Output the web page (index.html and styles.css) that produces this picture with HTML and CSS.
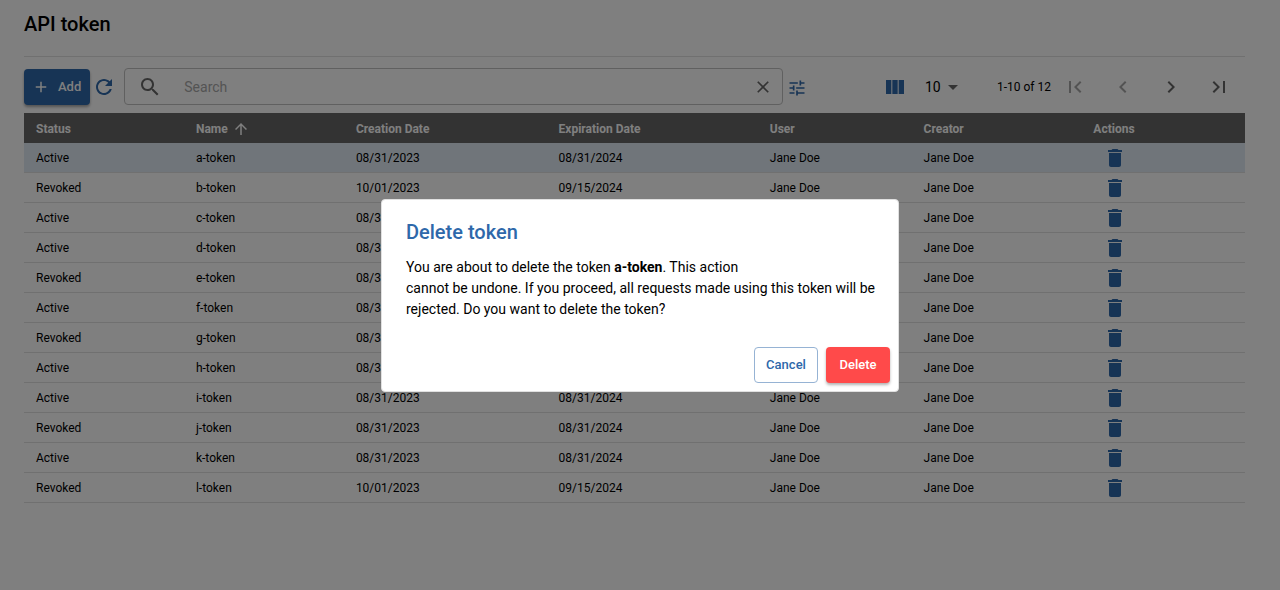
FILE: index.html
```html
<!DOCTYPE html>
<html lang="en">
<head>
<meta charset="utf-8">
<title>API token</title>
<meta name="viewport" content="width=device-width, initial-scale=1">
<link rel="stylesheet" href="styles.css">
</head>
<body>
<svg class="sprite" aria-hidden="true">
  <symbol id="trash" viewBox="0 0 24 24"><path d="M6 19c0 1.100.9 2 2 2h8c1.100 0 2-.9 2-2V7H6v12zM19 4h-3.500l-1-1h-5l-1 1H5v2h14V4z"/></symbol>
</svg>
<main class="page">
  <header class="page-header"><h1 class="page-title">API token</h1></header>
  <div class="toolbar">
    <button class="button button-add" type="button"><svg class="icon icon-small" viewBox="0 0 24 24"><path d="M19 13h-6v6h-2v-6H5v-2h6V5h2v6h6v2z"/></svg>Add</button>
    <button class="icon-button primary" type="button" aria-label="Refresh"><svg class="icon" viewBox="0 0 24 24"><path d="M17.650 6.350C16.200 4.900 14.210 4 12 4c-4.420 0-7.990 3.580-7.990 8s3.570 8 7.990 8c3.730 0 6.840-2.550 7.730-6h-2.080c-.82 2.330-3.040 4-5.650 4-3.310 0-6-2.690-6-6s2.690-6 6-6c1.660 0 3.140.69 4.220 1.780L13 11h7V4l-2.350 2.350z"/></svg></button>
    <div class="search">
      <svg class="icon" viewBox="0 0 24 24" aria-hidden="true"><path d="M15.500 14h-.79l-.28-.27C15.410 12.590 16 11.110 16 9.500 16 5.910 13.090 3 9.500 3S3 5.910 3 9.500 5.910 16 9.500 16c1.610 0 3.090-.59 4.230-1.570l.27.28v.79l5 4.990L20.490 19l-4.990-5zm-6 0C7.010 14 5 11.990 5 9.500S7.010 5 9.500 5 14 7.010 14 9.500 11.990 14 9.500 14z"/></svg>
      <input class="search-input" type="text" placeholder="Search" aria-label="Search">
      <button class="icon-button" type="button" aria-label="Clear"><svg class="icon icon-medium" viewBox="0 0 24 24"><path d="M19 6.410 17.590 5 12 10.590 6.410 5 5 6.410 10.590 12 5 17.590 6.410 19 12 13.410 17.590 19 19 17.590 13.410 12z"/></svg></button>
    </div>
    <button class="icon-button primary" type="button" aria-label="Search options"><svg class="icon icon-medium" viewBox="0 0 24 24"><path d="M3 17v2h6v-2H3zM3 5v2h10V5H3zm10 16v-2h8v-2h-8v-2h-2v6h2zM7 9v2H3v2h4v2h2V9H7zm14 4v-2H11v2h10zm-6-4h2V7h4V5h-4V3h-2v6z"/></svg></button>
    <div class="pagination">
      <button class="icon-button primary" type="button" aria-label="Columns"><svg class="icon" viewBox="0 0 24 24"><path d="M14.670 5v14H9.330V5h5.340zm1 14H21V5h-5.330v14zm-7.340 0V5H3v14h5.330z"/></svg></button>
      <label class="page-size">
        <select class="page-size-select" aria-label="Rows per page"><option>10</option><option>20</option></select>
        <svg class="icon" viewBox="0 0 24 24" aria-hidden="true"><path d="M7 10l5 5 5-5z"/></svg>
      </label>
      <span class="page-range">1-10 of 12</span>
      <div class="page-nav">
        <button class="icon-button nav-button" type="button" aria-label="First page" disabled><svg class="icon" viewBox="0 0 24 24"><path d="M18.410 16.590L13.820 12l4.590-4.590L17 6l-6 6 6 6zM6 6h2v12H6z"/></svg></button>
        <button class="icon-button nav-button" type="button" aria-label="Previous page" disabled><svg class="icon" viewBox="0 0 24 24"><path d="M15.410 7.410L14 6l-6 6 6 6 1.410-1.410L10.830 12z"/></svg></button>
        <button class="icon-button nav-button" type="button" aria-label="Next page"><svg class="icon" viewBox="0 0 24 24"><path d="M10 6L8.590 7.410 13.170 12l-4.580 4.590L10 18l6-6z"/></svg></button>
        <button class="icon-button nav-button" type="button" aria-label="Last page"><svg class="icon" viewBox="0 0 24 24"><path d="M5.590 7.410L10.180 12l-4.590 4.590L7 18l6-6-6-6zM16 6h2v12h-2z"/></svg></button>
      </div>
    </div>
  </div>
  <table class="tokens">
    <colgroup><col class="col-status"><col class="col-name"><col class="col-created"><col class="col-expires"><col class="col-user"><col class="col-creator"><col></colgroup>
    <thead><tr><th>Status</th><th><span class="sorted">Name<svg class="icon icon-sort" viewBox="0 0 24 24" aria-hidden="true"><path d="M4 12l1.410 1.410L11 7.830V20h2V7.830l5.580 5.590L20 12l-8-8-8 8z"/></svg></span></th><th>Creation Date</th><th>Expiration Date</th><th>User</th><th>Creator</th><th>Actions</th></tr></thead>
    <tbody>
      <tr class="selected"><td>Active</td><td>a-token</td><td>08/31/2023</td><td>08/31/2024</td><td>Jane Doe</td><td>Jane Doe</td><td><button class="icon-button primary row-action" type="button" aria-label="Delete a-token"><svg class="icon"><use href="#trash"/></svg></button></td></tr>
      <tr><td>Revoked</td><td>b-token</td><td>10/01/2023</td><td>09/15/2024</td><td>Jane Doe</td><td>Jane Doe</td><td><button class="icon-button primary row-action" type="button" aria-label="Delete b-token"><svg class="icon"><use href="#trash"/></svg></button></td></tr>
      <tr><td>Active</td><td>c-token</td><td>08/31/2023</td><td>08/31/2024</td><td>Jane Doe</td><td>Jane Doe</td><td><button class="icon-button primary row-action" type="button" aria-label="Delete c-token"><svg class="icon"><use href="#trash"/></svg></button></td></tr>
      <tr><td>Active</td><td>d-token</td><td>08/31/2023</td><td>08/31/2024</td><td>Jane Doe</td><td>Jane Doe</td><td><button class="icon-button primary row-action" type="button" aria-label="Delete d-token"><svg class="icon"><use href="#trash"/></svg></button></td></tr>
      <tr><td>Revoked</td><td>e-token</td><td>08/31/2023</td><td>08/31/2024</td><td>Jane Doe</td><td>Jane Doe</td><td><button class="icon-button primary row-action" type="button" aria-label="Delete e-token"><svg class="icon"><use href="#trash"/></svg></button></td></tr>
      <tr><td>Active</td><td>f-token</td><td>08/31/2023</td><td>08/31/2024</td><td>Jane Doe</td><td>Jane Doe</td><td><button class="icon-button primary row-action" type="button" aria-label="Delete f-token"><svg class="icon"><use href="#trash"/></svg></button></td></tr>
      <tr><td>Revoked</td><td>g-token</td><td>08/31/2023</td><td>08/31/2024</td><td>Jane Doe</td><td>Jane Doe</td><td><button class="icon-button primary row-action" type="button" aria-label="Delete g-token"><svg class="icon"><use href="#trash"/></svg></button></td></tr>
      <tr><td>Active</td><td>h-token</td><td>08/31/2023</td><td>08/31/2024</td><td>Jane Doe</td><td>Jane Doe</td><td><button class="icon-button primary row-action" type="button" aria-label="Delete h-token"><svg class="icon"><use href="#trash"/></svg></button></td></tr>
      <tr><td>Active</td><td>i-token</td><td>08/31/2023</td><td>08/31/2024</td><td>Jane Doe</td><td>Jane Doe</td><td><button class="icon-button primary row-action" type="button" aria-label="Delete i-token"><svg class="icon"><use href="#trash"/></svg></button></td></tr>
      <tr><td>Revoked</td><td>j-token</td><td>08/31/2023</td><td>08/31/2024</td><td>Jane Doe</td><td>Jane Doe</td><td><button class="icon-button primary row-action" type="button" aria-label="Delete j-token"><svg class="icon"><use href="#trash"/></svg></button></td></tr>
      <tr><td>Active</td><td>k-token</td><td>08/31/2023</td><td>08/31/2024</td><td>Jane Doe</td><td>Jane Doe</td><td><button class="icon-button primary row-action" type="button" aria-label="Delete k-token"><svg class="icon"><use href="#trash"/></svg></button></td></tr>
      <tr><td>Revoked</td><td>l-token</td><td>10/01/2023</td><td>09/15/2024</td><td>Jane Doe</td><td>Jane Doe</td><td><button class="icon-button primary row-action" type="button" aria-label="Delete l-token"><svg class="icon"><use href="#trash"/></svg></button></td></tr>
    </tbody>
  </table>
</main>
<div class="backdrop">
  <section class="dialog" role="dialog" aria-modal="true" aria-labelledby="dialog-title">
    <div class="dialog-body">
      <h2 class="dialog-title" id="dialog-title">Delete token</h2>
      <p class="dialog-text">You are about to delete the token <strong>a-token</strong>. This action<br>cannot be undone. If you proceed, all requests made using this token will be rejected. Do you want to delete the token?</p>
    </div>
    <div class="dialog-actions">
      <button class="button button-outline" type="button">Cancel</button>
      <button class="button button-danger" type="button">Delete</button>
    </div>
  </section>
</div>
</body>
</html>
```
FILE: styles.css
```css
* { box-sizing: border-box; }
body { margin: 0; background: #fff; color: #000; font-family: Roboto, "Liberation Sans", sans-serif; font-size: 12px; }
button, input, select { font: inherit; color: inherit; }
.sprite { display: none; }
.page { padding: 0 35px 24px 24px; }
.page-header { padding: 12px 0 20px; border-bottom: 1px solid #e0e0e0; }
.page-title { margin: 0; font-size: 20px; font-weight: 500; line-height: 24px; }

.icon { display: block; width: 24px; height: 24px; fill: currentColor; flex: none; }
.icon-medium { width: 20px; height: 20px; }
.icon-small { width: 18px; height: 18px; }
.icon-sort { width: 18px; height: 18px; }
.icon-button { display: flex; align-items: center; padding: 0; border: 0; background: none; color: #666; }
.primary { color: #2e68aa; }

.button { display: flex; align-items: center; justify-content: center; height: 36px; padding: 0 12px; border: 1px solid transparent; border-radius: 4px; font-size: 13px; font-weight: 500; }
.button-add { gap: 8px; padding: 0 8px 0 7px; background: #2e68aa; color: #fff; box-shadow: 0 2px 3px rgba(0, 0, 0, .35); }
.button-outline { width: 64px; border-color: #96b3d4; background: #fff; color: #2e68aa; }
.button-danger { width: 64px; background: #ff4a4a; color: #fff; box-shadow: 0 2px 3px rgba(0, 0, 0, .3); }

.toolbar { display: flex; align-items: center; padding: 11px 0 8px; }
.toolbar > .icon-button { margin: 0 4px 0 2px; }
.search { display: flex; align-items: center; flex: 0 1 659px; min-width: 160px; height: 37px; margin-left: 4px; padding: 0 9px 0 13px; border: 1px solid #c0c0c0; border-radius: 4px; color: #666; }
.search-input { flex: 1; min-width: 0; margin-left: 22px; padding: 0; border: 0; outline: 0; background: none; font-size: 14px; }
.search-input::placeholder { color: #a8a8a8; opacity: 1; }
.toolbar > .search + .icon-button { margin: 2px 0 0 4px; }
.pagination { display: flex; align-items: center; margin-left: auto; padding-right: 2px; }
.page-size { display: grid; align-items: center; margin-left: 18px; color: #666; }
.page-size > * { grid-area: 1 / 1; }
.page-size .icon { justify-self: end; pointer-events: none; }
.page-size-select { width: 40px; padding: 0; border: 0; background: none; appearance: none; font-size: 14px; color: #000; }
.page-range { margin-left: 32px; white-space: nowrap; }
.page-nav { display: flex; }
.nav-button { padding: 0 12px; }
.nav-button:disabled { color: #a6a6a6; }

.tokens { width: 100%; border-collapse: separate; border-spacing: 0; table-layout: fixed; line-height: 16px; }
.tokens th, .tokens td { height: 30px; padding: 0 12px; text-align: left; white-space: nowrap; }
.tokens th { padding-top: 2px; background: #666; color: #fff; font-weight: 700; }
.tokens td { border-bottom: 1px solid #e0e0e0; }
.selected td { background: #e1ebf5; }
.col-status { width: 13.1%; }
.col-name { width: 13.1%; }
.col-created { width: 16.6%; }
.col-expires { width: 17.3%; }
.col-user { width: 12.6%; }
.col-creator { width: 13.9%; }
.sorted { display: flex; align-items: center; gap: 4px; height: 16px; }
.row-action { margin-left: 10px; }

.backdrop { position: fixed; inset: 0; display: flex; align-items: center; justify-content: center; background: rgba(0, 0, 0, .5); }
.dialog { width: 518px; max-width: calc(100% - 64px); border: 1px solid #e0e0e0; border-radius: 4px; background: #fff; }
.dialog-body { padding: 20px 23px 27px 24px; }
.dialog-title { margin: 0 0 13px; color: #2e68aa; font-size: 20px; font-weight: 500; line-height: 24px; }
.dialog-text { margin: 0; font-size: 14px; line-height: 21px; }
.dialog-actions { display: flex; justify-content: flex-end; gap: 8px; padding: 0 8px 8px; }
```
